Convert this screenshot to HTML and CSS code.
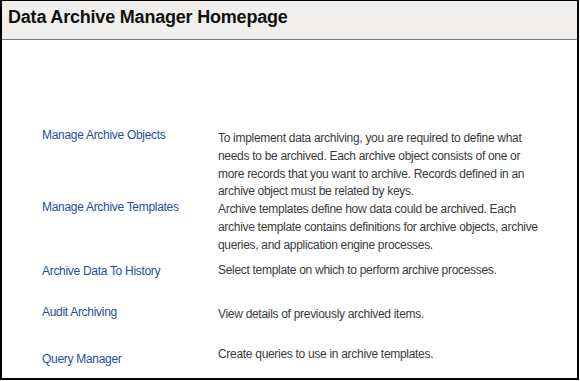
FILE: index.html
```html
<!DOCTYPE html>
<html lang="en">
<head>
  <meta charset="UTF-8">
  <title>Data Archive Manager Homepage</title>
  <link rel="stylesheet" href="styles.css">
</head>
<body>
  <div class="page">
    <div class="header">Data Archive Manager Homepage</div>

    <!-- Menu of archive components -->
    <div class="menu">
      <div class="row row-objects">
        <a class="link" href="#">Manage Archive Objects</a>
        <div class="desc">To implement data archiving, you are required to define what needs to be archived. Each archive object consists of one or more records that you want to archive. Records defined in an archive object must be related by keys.</div>
      </div>
      <div class="row row-templates">
        <a class="link" href="#">Manage Archive Templates</a>
        <div class="desc">Archive templates define how data could be archived. Each archive template contains definitions for archive objects, archive queries, and application engine processes.</div>
      </div>
      <div class="row row-history">
        <a class="link" href="#">Archive Data To History</a>
        <div class="desc">Select template on which to perform archive processes.</div>
      </div>
      <div class="row row-audit">
        <a class="link" href="#">Audit Archiving</a>
        <div class="desc">View details of previously archived items.</div>
      </div>
      <div class="row row-query">
        <a class="link" href="#">Query Manager</a>
        <div class="desc">Create queries to use in archive templates.</div>
      </div>
    </div>
  </div>
</body>
</html>
```

FILE: styles.css
```css
/* Base */
body {
  margin: 0;
  background: #fff;
  font-family: "Liberation Sans", Arial, sans-serif;
}

.page {
  box-sizing: border-box;
  width: 579px;
  height: 380px;
  border: 2px solid #000;
  border-top-width: 1px;
  background: #fff;
  overflow: hidden;
}

.header {
  height: 33px;
  padding: 5px 0 0 6px;
  line-height: 23px;
  font-size: 18px;
  font-weight: bold;
  letter-spacing: -0.2px;
  color: #111;
  background: #f0efed;
  border-bottom: 1px solid #7a7a7a;
}

/* Menu rows */
.menu {
  padding: 90px 0 0 40px;
}

.row {
  display: grid;
  grid-template-columns: 176px 326px;
  align-items: start;
  font-size: 12px;
  line-height: 17.8px;
  letter-spacing: -0.3px;
}

.link {
  color: #1d4f9e;
  text-decoration: none;
}

.link:hover {
  text-decoration: underline;
}

.desc {
  color: #3a3a3a;
}

.row-objects .link { margin-top: -3px; }

.row-templates .link { margin-top: -2px; }

.row-history { margin-top: 7px; }
.row-history .link { margin-top: 1px; }

.row-audit { margin-top: 26px; }
.row-audit .link { margin-top: -2px; }

.row-query { margin-top: 22px; }
.row-query .link { margin-top: 5px; }
```
